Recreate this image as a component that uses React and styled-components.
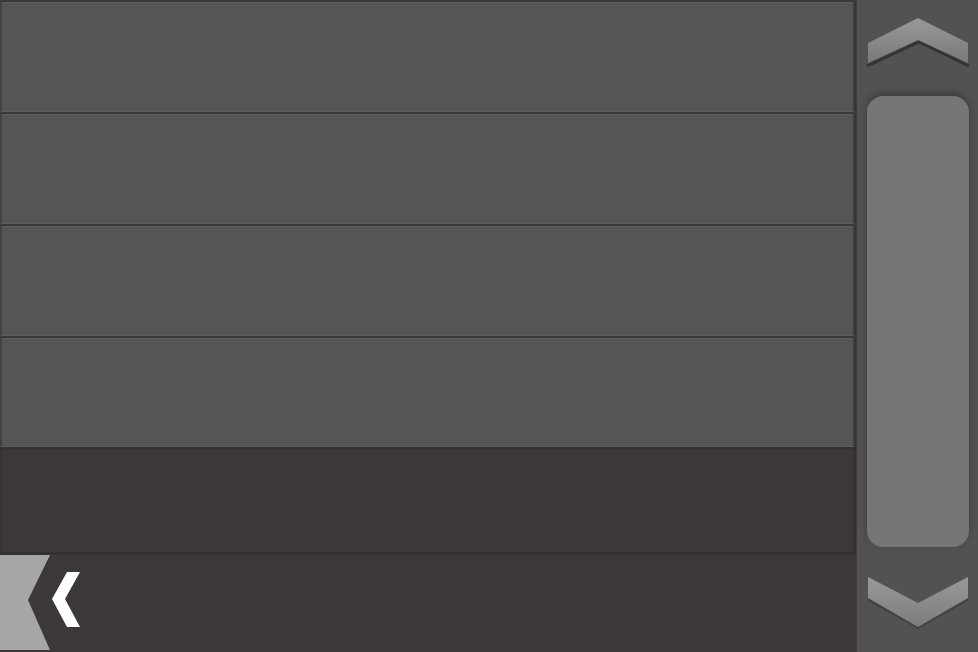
import React from "react";
import styled, { createGlobalStyle } from "styled-components";

const Global = createGlobalStyle`
  html, body { margin: 0; padding: 0; background: #3c3839; }
  body { font-family: "Liberation Sans", Arial, sans-serif; }
`;

const Screen = styled.div`
  width: 978px;
  height: 652px;
  display: grid;
  grid-template-columns: 856px 1fr;
  overflow: hidden;
  background: #3c3839;
`;

const Main = styled.div`
  display: flex;
  flex-direction: column;
`;

const List = styled.div`
  display: flex;
  flex-direction: column;
  background: #383536;
  border-right: 1px solid #343132;
`;

const Row = styled.div`
  height: ${(p) => p.h}px;
  box-sizing: border-box;
  background: ${(p) => (p.dark ? "#3c3839" : "#565455")};
  border: 1px solid #5c5a5b;
  border-top: 2px solid #3a3738;
  border-left: 2px solid #444142;
  border-right: 2px solid #3f3c3d;
  border-color: ${(p) => (p.dark ? "#343132" : undefined)};
  box-shadow: inset 0 1px 0 ${(p) => (p.dark ? "#3a3637" : "#5e5c5d")};
`;

const BottomBar = styled.div`
  flex: 1;
  display: flex;
  align-items: stretch;
  background: #3c3839;
  border-top: 2px solid #343132;
`;

const Scroll = styled.div`
  display: flex;
  flex-direction: column;
  align-items: center;
  background: #535152;
  border-left: 1px solid #3f3c3d;
  padding: 0 9px;
`;

const Arrow = styled.svg`
  display: block;
  width: 104px;
  height: ${(p) => p.h}px;
  flex: none;
`;

const Thumb = styled.div`
  flex: none;
  width: 102px;
  height: 451px;
  border-radius: 16px;
  background: #777576;
  box-shadow: 0 -3px 6px rgba(40, 38, 39, 0.5);
`;

const UpArrow = () => (
  <Arrow h={96} viewBox="0 0 104 96">
    <defs>
      <linearGradient id="upg" x1="0" y1="0" x2="0" y2="1">
        <stop offset="0" stopColor="#9a9899" />
        <stop offset="1" stopColor="#7a7879" />
      </linearGradient>
    </defs>
    <polyline points="1,66 53,42 103,66" fill="none" stroke="#2f2c2d" strokeWidth="3" opacity="0.8" />
    <polygon points="2,43 52,18 102,43 102,63 52,40 2,63" fill="url(#upg)" />
  </Arrow>
);

const DownArrow = () => (
  <Arrow h={105} viewBox="0 0 104 105">
    <defs>
      <linearGradient id="dng" x1="0" y1="0" x2="0" y2="1">
        <stop offset="0" stopColor="#9a9899" />
        <stop offset="1" stopColor="#7d7b7c" />
      </linearGradient>
    </defs>
    <polygon points="2,32 52,58 102,32 102,54 52,82 2,54" fill="#3d3a3b" opacity="0.7" />
    <polygon points="2,30 52,56 102,30 102,51 52,80 2,51" fill="url(#dng)" />
  </Arrow>
);

const BackIcon = styled.svg`
  display: block;
  width: 90px;
  height: 95px;
`;

const BackButton = () => (
  <BackIcon viewBox="0 0 90 95">
    <polygon points="0,0 50,0 28,45 50,95 0,95" fill="#a6a6a6" />
    <polygon points="67,17 80,17 65,44 80,72 67,72 52,44" fill="#ffffff" />
  </BackIcon>
);

const rows = [
  { h: 112 },
  { h: 112 },
  { h: 112 },
  { h: 111 },
  { h: 106, dark: true },
];

export default function App() {
  return (
    <Screen>
      <Global />
      <Main>
        <List>
          {rows.map((r, i) => (
            <Row key={i} h={r.h} dark={r.dark} />
          ))}
        </List>
        <BottomBar>
          <BackButton />
        </BottomBar>
      </Main>
      <Scroll>
        <UpArrow />
        <Thumb />
        <DownArrow />
      </Scroll>
    </Screen>
  );
}
